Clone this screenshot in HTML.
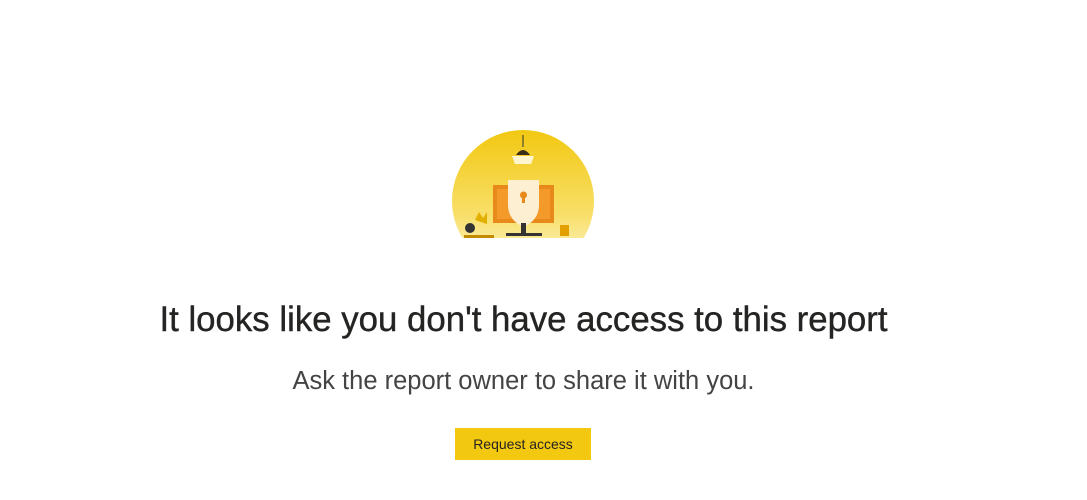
<!DOCTYPE html>
<html><head><style>
body{margin:0;width:1087px;height:500px;background:#fff;font-family:"Liberation Sans",sans-serif;overflow:hidden;position:relative}
h1{position:absolute;top:300px;left:0;width:1047px;text-align:center;margin:0;font-size:34.8px;font-weight:normal;color:#252423;-webkit-text-stroke:0.4px #252423}
p{position:absolute;top:367px;left:0;width:1047px;text-align:center;margin:0;font-size:25.5px;color:#444}
.btn{position:absolute;left:455px;top:428px;width:136px;height:32px;background:#f2c811;color:#252423;font-size:14px;line-height:32px;text-align:center}
</style></head><body>
<svg style="position:absolute;left:448px;top:125px" width="150" height="120" viewBox="0 0 150 120">
<defs><linearGradient id="g" x1="0" y1="0" x2="0" y2="1"><stop offset="0" stop-color="#f2c811"/><stop offset="0.6" stop-color="#f8df6a"/><stop offset="1" stop-color="#fff8d8"/></linearGradient>
<clipPath id="c"><rect x="0" y="0" width="150" height="113"/></clipPath></defs>
<circle cx="75" cy="76" r="71" fill="url(#g)" clip-path="url(#c)"/>
<line x1="75" y1="10" x2="75" y2="22" stroke="#333" stroke-width="1"/>
<path d="M68 30 Q75 20 82 30Z" fill="#3a2e1a"/>
<path d="M64 31 h22 l-3 8 h-16z" fill="#fff6d0"/>
<rect x="45" y="60" width="61" height="38" fill="#e8891c"/>
<rect x="49" y="64" width="53" height="30" fill="#f39a2a"/>
<path d="M60 55 h31 v25 q0 15 -15.5 22 q-15.5 -7 -15.5 -22z" fill="#fcefd2"/>
<circle cx="75.5" cy="70" r="3.5" fill="#e8891c"/><rect x="74" y="71" width="3" height="7" fill="#e8891c"/>
<rect x="73" y="98" width="5" height="11" fill="#333"/><rect x="58" y="108" width="36" height="3" fill="#333"/>
<circle cx="22" cy="103" r="5" fill="#333"/><path d="M27 95 l4 -8 l4 6 l4 -6 v12z" fill="#e2b000"/>
<rect x="112" y="100" width="9" height="11" fill="#e2a000"/>
<rect x="16" y="110" width="30" height="3" fill="#c48a00"/>
</svg>
<h1>It looks like you don't have access to this report</h1>
<p>Ask the report owner to share it with you.</p>
<div class="btn">Request access</div>
</body></html>
